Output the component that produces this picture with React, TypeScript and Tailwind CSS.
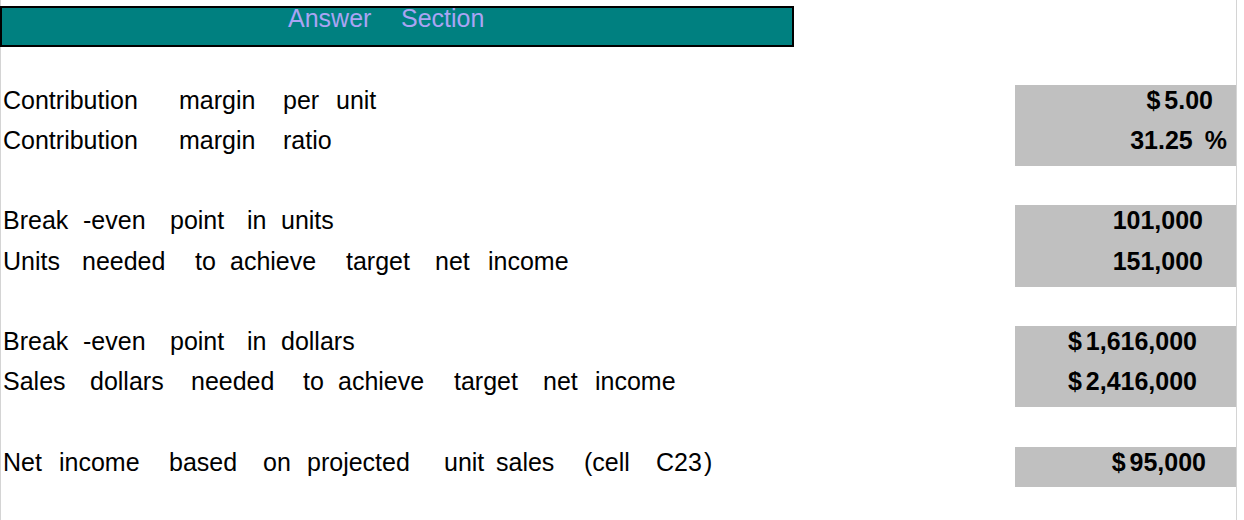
type Word = [string, string];

type Line = {
  words: Word[];
  value: React.ReactNode;
  h: string;
  pr: string;
};

const groups: { gap: string; lines: Line[] }[] = [
  {
    gap: "h-[38px]",
    lines: [
      {
        words: [
          ["Contribution", "w-[176px]"],
          ["margin", "w-[104px]"],
          ["per", "w-[53px]"],
          ["unit", ""],
        ],
        value: <Money v="5.00" />,
        h: "h-[40px]",
        pr: "pr-[23px]",
      },
      {
        words: [
          ["Contribution", "w-[176px]"],
          ["margin", "w-[104px]"],
          ["ratio", ""],
        ],
        value: (
          <>
            31.25<span className="ml-[12px]">%</span>
          </>
        ),
        h: "h-[41px]",
        pr: "pr-[9px]",
      },
    ],
  },
  {
    gap: "h-[39px]",
    lines: [
      {
        words: [
          ["Break", "w-[80px]"],
          ["-even", "w-[87px]"],
          ["point", "w-[77px]"],
          ["in", "w-[34px]"],
          ["units", ""],
        ],
        value: "101,000",
        h: "h-[41px]",
        pr: "pr-[33px]",
      },
      {
        words: [
          ["Units", "w-[79px]"],
          ["needed", "w-[113px]"],
          ["to", "w-[35px]"],
          ["achieve", "w-[116px]"],
          ["target", "w-[89px]"],
          ["net", "w-[53px]"],
          ["income", ""],
        ],
        value: "151,000",
        h: "h-[41px]",
        pr: "pr-[33px]",
      },
    ],
  },
  {
    gap: "h-[39px]",
    lines: [
      {
        words: [
          ["Break", "w-[80px]"],
          ["-even", "w-[87px]"],
          ["point", "w-[77px]"],
          ["in", "w-[34px]"],
          ["dollars", ""],
        ],
        value: <Money v="1,616,000" />,
        h: "h-[40px]",
        pr: "pr-[39px]",
      },
      {
        words: [
          ["Sales", "w-[87px]"],
          ["dollars", "w-[101px]"],
          ["needed", "w-[112px]"],
          ["to", "w-[35px]"],
          ["achieve", "w-[116px]"],
          ["target", "w-[89px]"],
          ["net", "w-[52px]"],
          ["income", ""],
        ],
        value: <Money v="2,416,000" />,
        h: "h-[41px]",
        pr: "pr-[39px]",
      },
    ],
  },
  {
    gap: "h-[40px]",
    lines: [
      {
        words: [
          ["Net", "w-[56px]"],
          ["income", "w-[110px]"],
          ["based", "w-[94px]"],
          ["on", "w-[44px]"],
          ["projected", "w-[137px]"],
          ["unit", "w-[52px]"],
          ["sales", "w-[88px]"],
          ["(cell", "w-[72px]"],
          ["C23", "w-[48px]"],
          [")", ""],
        ],
        value: <Money v="95,000" />,
        h: "h-[40px]",
        pr: "pr-[30px]",
      },
    ],
  },
];

function Money({ v }: { v: string }) {
  return (
    <>
      <span className="mr-[4px]">$</span>
      {v}
    </>
  );
}

function Row({ line }: { line: Line }) {
  return (
    <div className={`flex ${line.h}`}>
      <div className="flex-1 whitespace-nowrap pl-[2px] pt-[3px] text-[25px] leading-[24px]">
        {line.words.map(([w, cls], i) => (
          <span key={i} className={`inline-block ${cls}`}>
            {w}
          </span>
        ))}
      </div>
      <div
        className={`w-[221px] whitespace-nowrap bg-[#c0c0c0] pt-[3px] text-right text-[25px] font-bold leading-[24px] ${line.pr}`}
      >
        {line.value}
      </div>
    </div>
  );
}

export default function App() {
  return (
    <div className="h-[520px] w-[1237px] border-l border-r border-[#d4d4d4] bg-white font-['Liberation_Sans',Arial,sans-serif] text-black">
      <div className="h-[6px]" />
      {/* title bar */}
      <div className="-ml-px h-[41px] w-[794px] border-2 border-black bg-[#008080] pl-[286px] text-[25px] leading-[20px] text-[#aaa4f4]">
        <span className="inline-block w-[113px]">Answer</span>
        <span className="inline-block">Section</span>
      </div>

      {groups.map((g, i) => (
        <div key={i}>
          <div className={g.gap} />
          {g.lines.map((l, j) => (
            <Row key={j} line={l} />
          ))}
        </div>
      ))}
    </div>
  );
}
